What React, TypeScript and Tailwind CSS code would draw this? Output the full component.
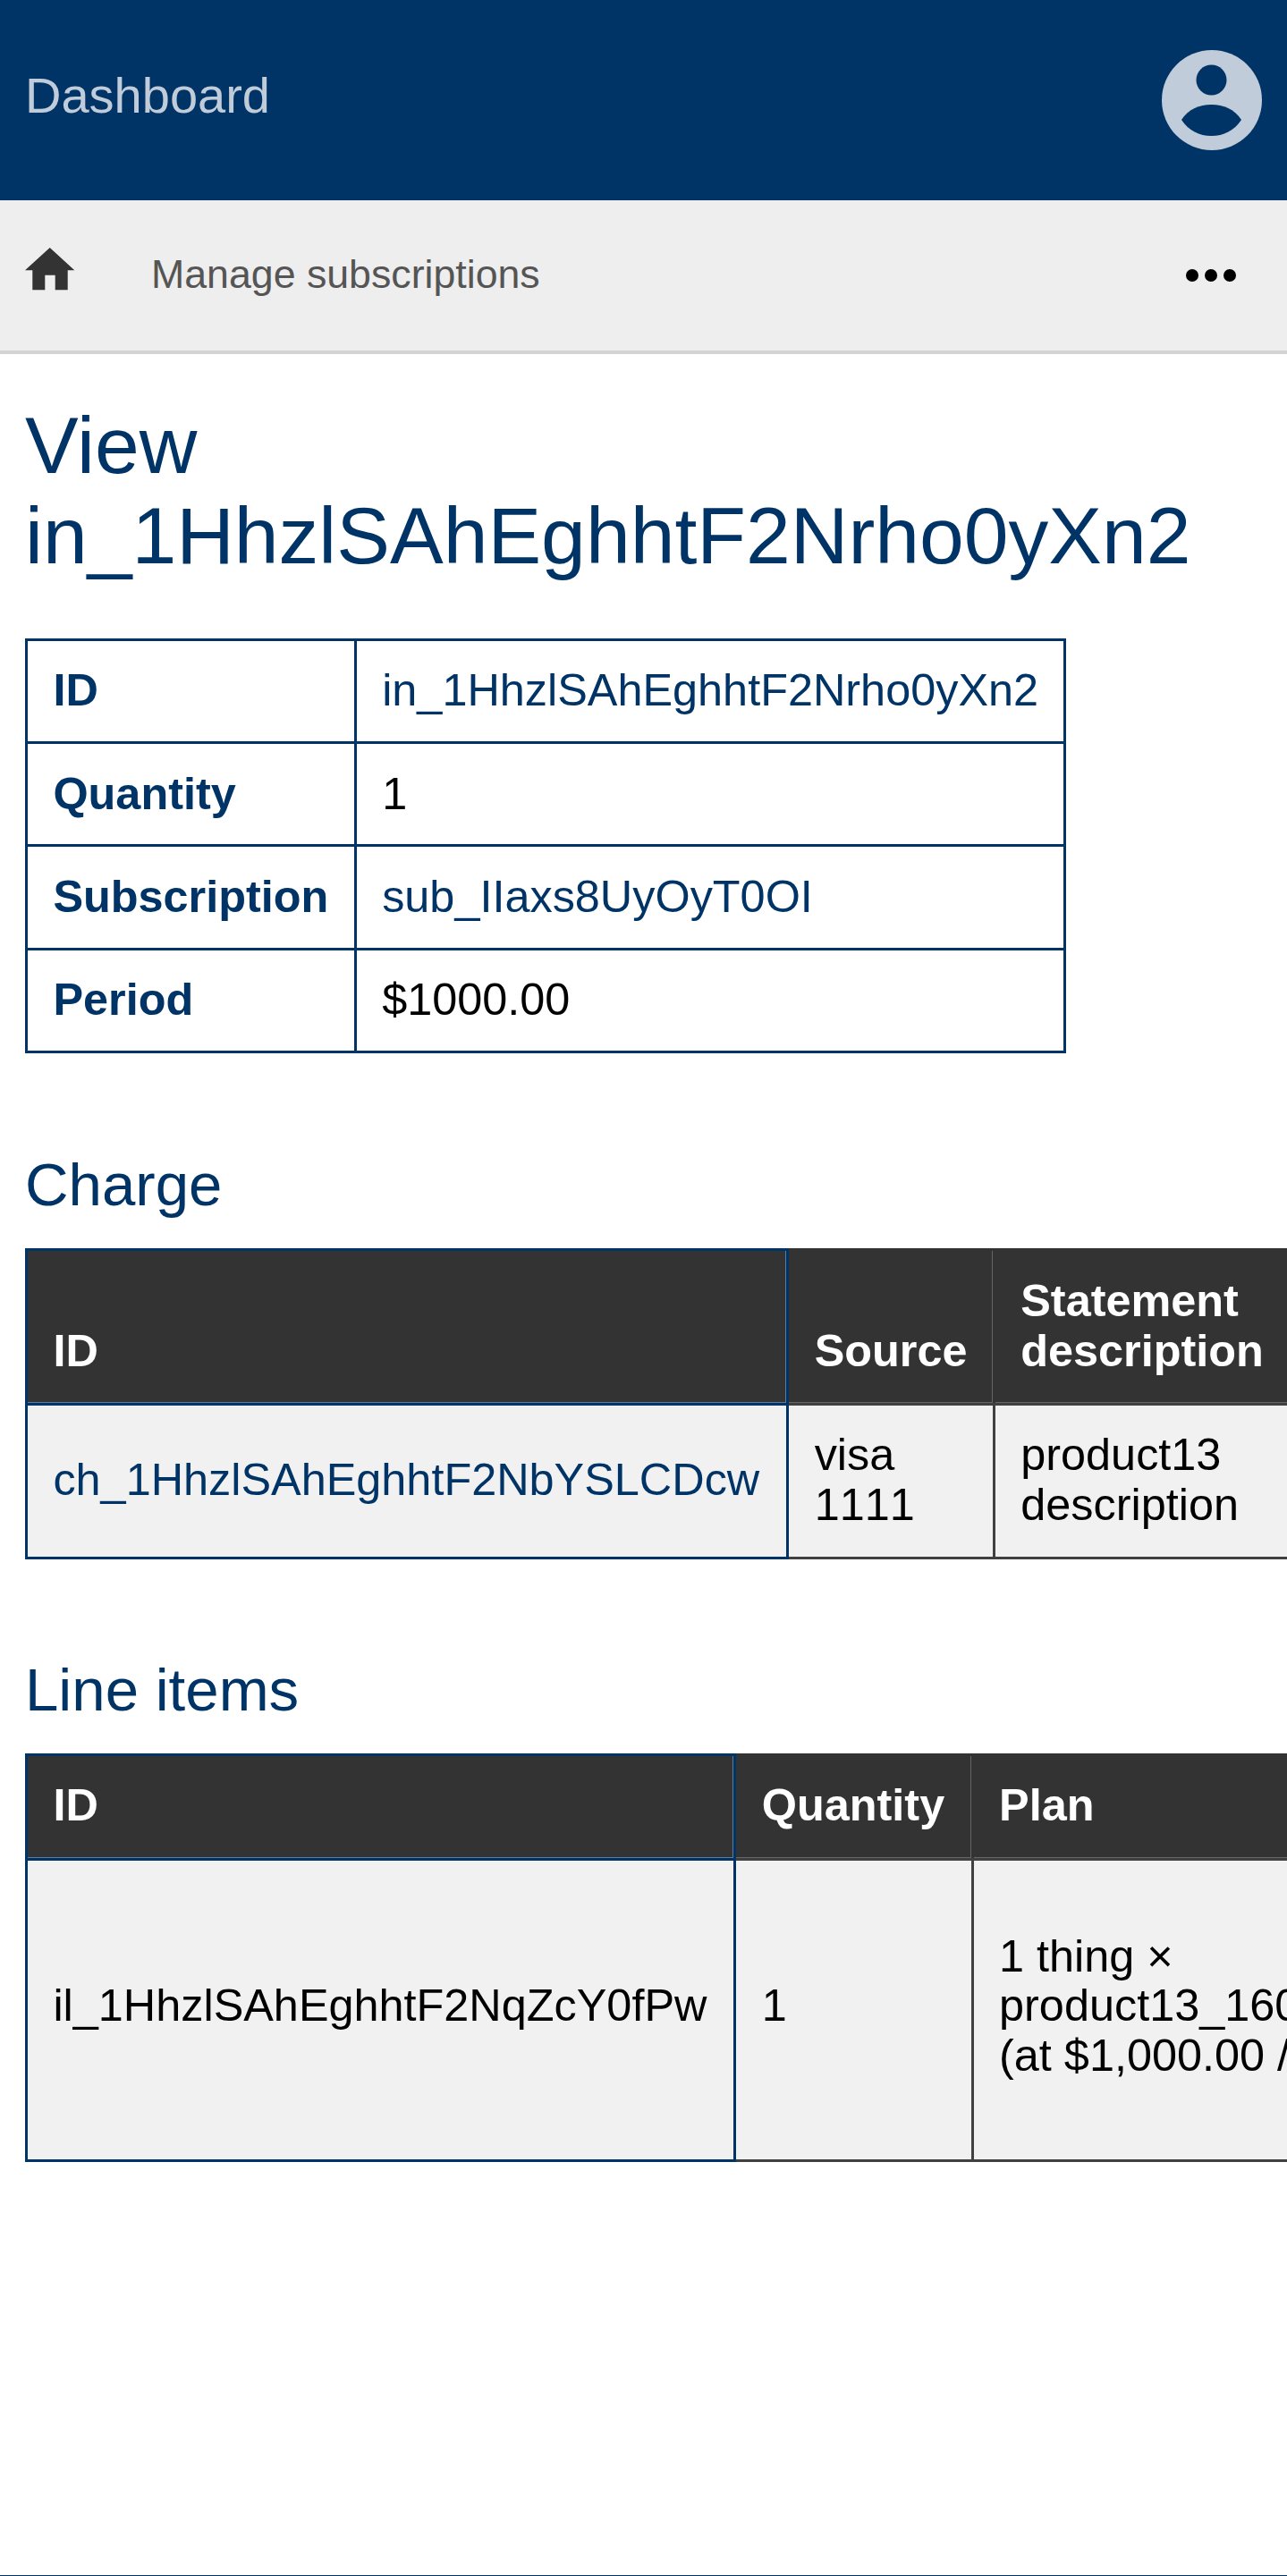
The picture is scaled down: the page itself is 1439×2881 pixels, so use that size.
const blue = "#003366";

function HomeIcon() {
    return (
        <svg className="w-[56px] h-[48px] mb-[14px]" viewBox="0 0 56 48" fill="#333333">
            <path d="M27.7 0 L55.3 25.3 H47.7 V47.3 H33.7 V30.7 H22.3 V47.3 H8.3 V25.3 H0 Z" />
        </svg>
    );
}

function Avatar() {
    return (
        <svg className="w-[112px] h-[112px]" viewBox="0 0 112 112">
            <circle cx="56" cy="56" r="56" fill="#c0ccd9" />
            <circle cx="55.5" cy="33.5" r="17" fill={blue} />
            <path d="M22 78 C30 66 42 61 55.5 61 C69 61 81 66 89 78 C81 90 69 96 55.5 96 C42 96 30 90 22 78 Z" fill={blue} />
        </svg>
    );
}

function Dots() {
    return (
        <div className="flex items-center gap-[7px]">
            <span className="w-[14px] h-[14px] rounded-full bg-black" />
            <span className="w-[14px] h-[14px] rounded-full bg-black" />
            <span className="w-[14px] h-[14px] rounded-full bg-black" />
        </div>
    );
}

const summaryLabel = "border-[3px] border-[#003366] px-[28.4px] pt-[27.4px] pb-[29.4px] text-left font-bold text-[#003366]";
const summaryValue = "border-[3px] border-l-0 border-[#003366] px-[28.4px] pt-[27.4px] pb-[29.4px] text-left";
const headFirst = "border-[3px] border-b-0 border-[#003366] bg-[#333333] pl-[28.4px] pr-[30px] pt-[28.4px] pb-[31.4px] text-left align-bottom font-bold text-white shadow-[inset_-1px_-1px_0_#5f7a96]";
const headCell = "border-t-[3px] border-r-[3px] border-[#333333] bg-[#333333] px-[28.4px] pt-[28.4px] pb-[31.4px] text-left align-bottom font-bold text-white shadow-[inset_-1px_-1px_0_#666666]";
const bodyFirst = "border-[3px] border-[#003366] bg-[#f1f1f1] pl-[28.4px] pr-[30px] pt-[27px] pb-[30.8px] text-left";
const bodyCell = "border-t-[3px] border-r-[3px] border-b-[3px] border-[#404040] bg-[#f1f1f1] px-[28.4px] pt-[27px] pb-[30.8px] text-left";

function Summary() {
    const rows = [
        { label: "ID", value: "in_1HhzlSAhEghhtF2Nrho0yXn2", link: true },
        { label: "Quantity", value: "1", link: false },
        { label: "Subscription", value: "sub_IIaxs8UyOyT0OI", link: true },
        { label: "Period", value: "$1000.00", link: false },
    ];
    return (
        <table className="w-max border-separate border-spacing-0 mt-[64px]">
            <tbody>
                {rows.map((row, i) => (
                    <tr key={row.label}>
                        <th className={summaryLabel + (i > 0 ? " border-t-0" : "")}>{row.label}</th>
                        <td className={summaryValue + (i > 0 ? " border-t-0" : "")}>
                            {row.link ? <a className="text-[#003366]">{row.value}</a> : row.value}
                        </td>
                    </tr>
                ))}
            </tbody>
        </table>
    );
}

function Charge() {
    return (
        <table className="w-max border-separate border-spacing-0">
            <thead>
                <tr>
                    <th className={headFirst}>ID</th>
                    <th className={headCell}>Source</th>
                    <th className={headCell}>Statement<br />description</th>
                </tr>
            </thead>
            <tbody>
                <tr>
                    <td className={bodyFirst}><a className="text-[#003366]">ch_1HhzlSAhEghhtF2NbYSLCDcw</a></td>
                    <td className={bodyCell}>visa<br />1111</td>
                    <td className={bodyCell}>product13<br />description</td>
                </tr>
            </tbody>
        </table>
    );
}

function LineItems() {
    return (
        <table className="w-max border-separate border-spacing-0">
            <thead>
                <tr>
                    <th className={headFirst + " !pt-[27.4px]"}>ID</th>
                    <th className={headCell + " !pt-[27.4px] !pr-[29.5px]"}>Quantity</th>
                    <th className={headCell + " !pt-[27.4px]"}>Plan</th>
                </tr>
            </thead>
            <tbody>
                <tr className="h-[340px]">
                    <td className={bodyFirst + " !pb-[37px]"}>il_1HhzlSAhEghhtF2NqZcY0fPw</td>
                    <td className={bodyCell + " !pb-[37px]"}>1</td>
                    <td className={bodyCell + " !pb-[37px]"}>1 thing ×<br />product13_1600000000<br />(at $1,000.00 / month)</td>
                </tr>
            </tbody>
        </table>
    );
}

export default function App() {
    return (
        <div className="flex flex-col min-h-[2881px] w-full overflow-hidden bg-white text-black text-[50.4px] leading-[55.4px] [font-kerning:none] [font-family:'Liberation_Sans',Arial,sans-serif] border-b border-[#003366]">
            {/* Top bar */}
            <header className="flex items-center justify-between h-[224px] pl-[28px] pr-[28px] bg-[#003366]">
                <span className="pb-[10px] text-[56px] leading-[62px] text-[#c0ccd9]">Dashboard</span>
                <Avatar />
            </header>

            {/* Menu */}
            <nav className="flex items-center h-[172px] pl-[28px] pr-[57px] bg-[#eeeeee] border-b-[4px] border-[#d3d3d3]">
                <HomeIcon />
                <span className="ml-[85px] pb-[2px] text-[44.7px] leading-[50px] text-[#555555]">Manage subscriptions</span>
                <div className="ml-auto"><Dots /></div>
            </nav>

            <main className="flex-1 px-[28px] pt-[52px]">
                <h1 className="text-[89.5px] leading-[101px] text-[#003366] [font-kerning:normal]">View<br />in_1HhzlSAhEghhtF2Nrho0yXn2</h1>
                <Summary />
                <h2 className="mt-[109px] mb-[34px] text-[67.2px] leading-[75px] text-[#003366]">Charge</h2>
                <Charge />
                <h2 className="mt-[108px] mb-[34px] text-[67.2px] leading-[75px] text-[#003366]">Line items</h2>
                <LineItems />
            </main>
        </div>
    );
}
